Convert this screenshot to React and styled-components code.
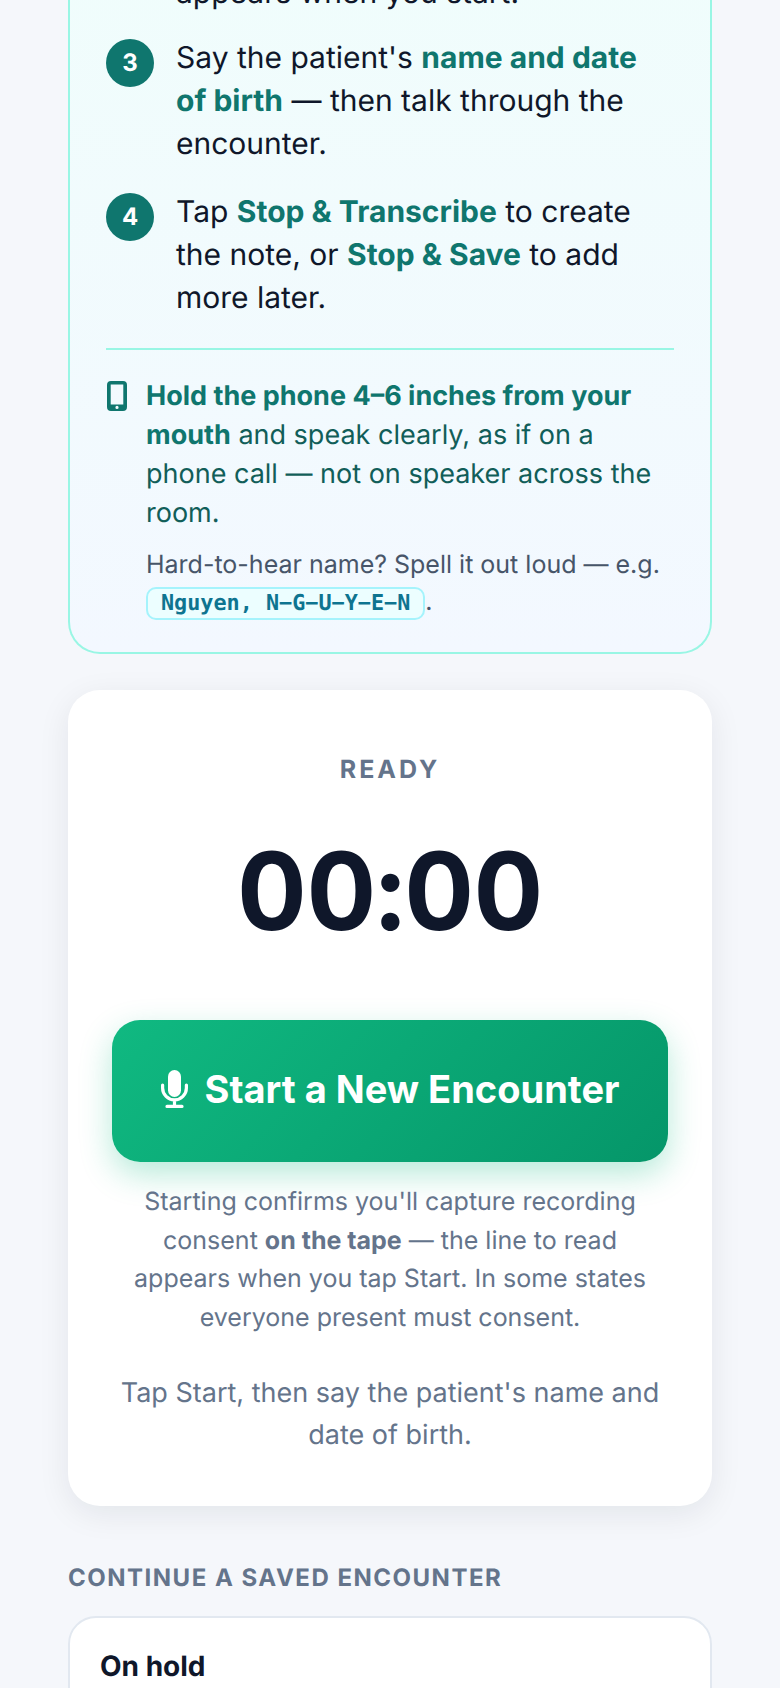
import React from "react";
import styled, { createGlobalStyle } from "styled-components";

const GlobalStyle = createGlobalStyle`
  html, body {
    margin: 0;
    height: 1688px;
    overflow: hidden;
    background: #f5f7fb;
  }
  body {
    font-family: Inter, "Liberation Sans", sans-serif;
    text-rendering: geometricPrecision;
  }
`;

const Page = styled.main`
  display: flex;
  flex-direction: column;
  gap: 36px;
  margin-top: -28px;
  padding: 0 68px;
`;

const TipBox = styled.section`
  padding: 0 36px 30px;
  border: 2px solid #99f6e4;
  border-top: 0;
  border-radius: 0 0 32px 32px;
  background: linear-gradient(180deg, #f0fdfc 0%, #f3f8ff 100%);
`;

const StepList = styled.ol`
  display: flex;
  flex-direction: column;
  gap: 25px;
  margin: 0;
  padding: 0;
  list-style: none;
`;

const StepTail = styled.li`
  margin-bottom: -3px;
  padding-left: 70px;
  font-size: 30px;
  line-height: 43px;
  color: #0f172a;
`;

const Step = styled.li`
  display: flex;
  gap: 22px;
  font-size: 30px;
  line-height: 43px;
  color: #0f172a;
`;

const StepBadge = styled.span`
  flex: none;
  display: flex;
  align-items: center;
  justify-content: center;
  width: 48px;
  height: 48px;
  margin-top: 2px;
  border-radius: 50%;
  background: #0f766e;
  color: #fff;
  font-size: 24px;
  font-weight: 700;
  line-height: 1;
`;

const Accent = styled.strong`
  color: #0f766e;
  font-weight: 700;
`;

const Divider = styled.hr`
  height: 2px;
  margin: 28px 0 26px;
  border: 0;
  background: #99f6e4;
`;

const PhoneTip = styled.div`
  display: flex;
  gap: 18px;
`;

const PhoneSvg = styled.svg`
  flex: none;
  width: 22px;
  height: 30px;
  margin-top: 5px;
  color: #0f766e;
`;

const TipBody = styled.div`
  display: flex;
  flex-direction: column;
  gap: 15px;
`;

const TipText = styled.p`
  margin: 0;
  font-size: 27px;
  line-height: 39px;
  color: #115e59;
`;

const SpellText = styled.p`
  margin: 0;
  font-size: 25px;
  line-height: 37px;
  color: #475569;
`;

const SpellCode = styled.code`
  padding: 2px 13px;
  border: 2px solid #a5f3fc;
  border-radius: 10px;
  background: #ecfeff;
  color: #0e7490;
  font-family: "DejaVu Sans Mono", "Liberation Mono", monospace;
  font-size: 21.8px;
  font-weight: 700;
`;

const RecorderCard = styled.section`
  display: flex;
  flex-direction: column;
  align-items: center;
  padding: 65px 44px 50px;
  border-radius: 32px;
  background: #fff;
  box-shadow: 0 8px 32px rgba(15, 23, 42, 0.08);
`;

const StatusLabel = styled.div`
  font-size: 25px;
  font-weight: 700;
  line-height: 30px;
  letter-spacing: 3px;
  color: #64748b;
`;

const Timer = styled.div`
  margin-top: 39px;
  font-size: 108px;
  font-weight: 700;
  line-height: 136px;
  letter-spacing: -0.5px;
  font-variant-numeric: tabular-nums;
  color: #0f172a;
`;

const StartButton = styled.button`
  display: flex;
  align-items: center;
  justify-content: center;
  gap: 17px;
  width: 100%;
  height: 142px;
  margin-top: 60px;
  padding: 0 0 5px;
  border: 0;
  border-radius: 28px;
  background: linear-gradient(135deg, #10b981, #059669);
  box-shadow: 0 12px 32px rgba(16, 185, 129, 0.3);
  color: #fff;
  font-family: inherit;
  font-size: 38px;
  font-weight: 700;
`;

const MicSvg = styled.svg`
  flex: none;
  width: 27px;
  height: 38px;
`;

const ConsentNote = styled.p`
  margin: 21px 0 0;
  font-size: 25px;
  line-height: 38.5px;
  text-align: center;
  color: #64748b;
`;

const ConsentStrong = styled.strong`
  font-weight: 700;
  color: #64748b;
`;

const StartHint = styled.p`
  margin: 35px 0 0;
  font-size: 27px;
  line-height: 42px;
  text-align: center;
  color: #64748b;
`;

const SavedSection = styled.section`
  display: flex;
  flex-direction: column;
  gap: 23px;
  margin-top: 21px;
`;

const SectionTitle = styled.h2`
  margin: 0;
  font-size: 24px;
  font-weight: 700;
  line-height: 30px;
  letter-spacing: 1.5px;
  color: #64748b;
`;

const SavedCard = styled.div`
  padding: 30px;
  height: 60px;
  border: 2px solid #e2e8f0;
  border-radius: 28px;
  background: #fff;
`;

const SavedName = styled.div`
  font-size: 28px;
  font-weight: 700;
  line-height: 36px;
  color: #0f172a;
`;

function PhoneIcon() {
  return (
    <PhoneSvg viewBox="0 0 22 30" aria-hidden="true">
      <path
        fill="currentColor"
        fillRule="evenodd"
        d="M5 0h12a4 4 0 0 1 4 4v22a4 4 0 0 1-4 4H5a4 4 0 0 1-4-4V4a4 4 0 0 1 4-4z M4.7 3.4v20.1h12.6V3.4z M11 24.8a1.6 1.6 0 1 0 0 3.2 1.6 1.6 0 0 0 0-3.2z"
      />
    </PhoneSvg>
  );
}

function MicIcon() {
  return (
    <MicSvg viewBox="0 0 27 38" aria-hidden="true">
      <rect x="7" y="0" width="13" height="27" rx="6.5" fill="#fff" />
      <path
        d="M1.6 15v3a11.9 11.9 0 0 0 23.8 0v-3M13.5 30v6.5M6 36.4h15"
        fill="none"
        stroke="#fff"
        strokeWidth="3.2"
        strokeLinecap="round"
      />
    </MicSvg>
  );
}

export default function App() {
  return (
    <>
      <GlobalStyle />
      <Page>
        <TipBox>
          <StepList>
            <StepTail>appears when you start.</StepTail>
            <Step>
              <StepBadge>3</StepBadge>
              <span>
                Say the patient's <Accent>name and date of birth</Accent> — then
                talk through the encounter.
              </span>
            </Step>
            <Step>
              <StepBadge>4</StepBadge>
              <span>
                Tap <Accent>Stop &amp; Transcribe</Accent> to create the note, or{" "}
                <Accent>Stop &amp; Save</Accent> to add more later.
              </span>
            </Step>
          </StepList>
          <Divider />
          <PhoneTip>
            <PhoneIcon />
            <TipBody>
              <TipText>
                <Accent>Hold the phone 4–6 inches from your mouth</Accent> and
                speak clearly, as if on a phone call — not on speaker across the
                room.
              </TipText>
              <SpellText>
                Hard-to-hear name? Spell it out loud — e.g.{" "}
                <SpellCode>Nguyen, N−G−U−Y−E−N</SpellCode>.
              </SpellText>
            </TipBody>
          </PhoneTip>
        </TipBox>

        <RecorderCard>
          <StatusLabel>READY</StatusLabel>
          <Timer>00:00</Timer>
          <StartButton>
            <MicIcon />
            Start a New Encounter
          </StartButton>
          <ConsentNote>
            Starting confirms you'll capture recording consent{" "}
            <ConsentStrong>on the tape</ConsentStrong> — the line to read appears
            when you tap Start. In some states everyone present must consent.
          </ConsentNote>
          <StartHint>Tap Start, then say the patient's name and date of birth.</StartHint>
        </RecorderCard>

        <SavedSection>
          <SectionTitle>CONTINUE A SAVED ENCOUNTER</SectionTitle>
          <SavedCard>
            <SavedName>On hold</SavedName>
          </SavedCard>
        </SavedSection>
      </Page>
    </>
  );
}
